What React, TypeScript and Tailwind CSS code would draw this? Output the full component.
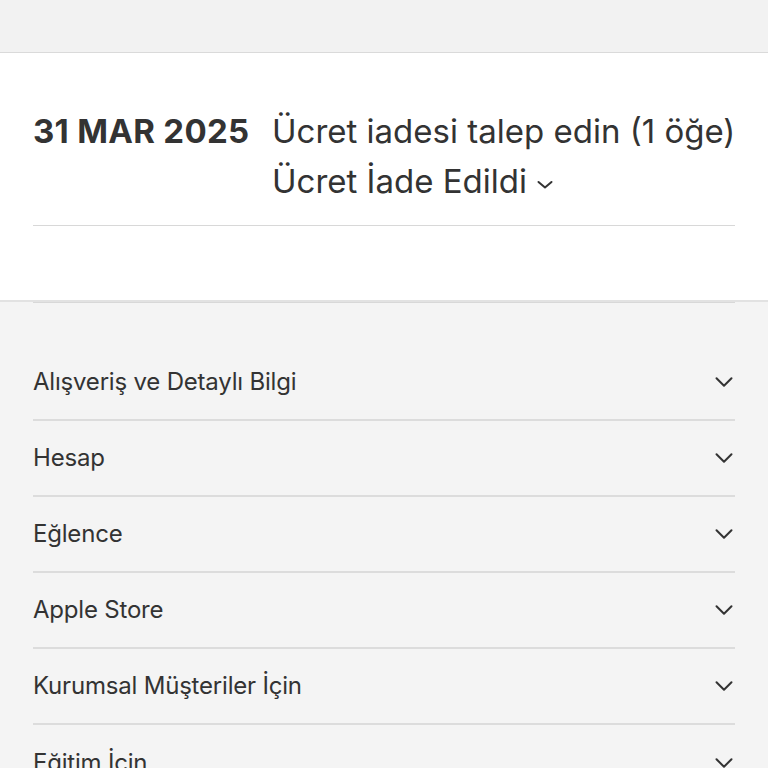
import { ChevronDown } from 'lucide-react'

const sections = [
  'Alışveriş ve Detaylı Bilgi',
  'Hesap',
  'Eğlence',
  'Apple Store',
  'Kurumsal Müşteriler İçin',
  'Eğitim İçin',
]

function SmallChevron() {
  return (
    <svg width="18" height="11" viewBox="0 0 18 11" className="ml-[9px] mt-[6px] inline-block">
      <path d="M2.5 3l6.5 5.5 6.5-5.5" fill="none" stroke="#333" strokeWidth="2" strokeLinecap="round" strokeLinejoin="round" />
    </svg>
  )
}

export default function App() {
  return (
    <div className="h-[768px] overflow-hidden bg-[#f4f4f4] text-[#333] [font-family:Inter,'Noto_Sans',sans-serif]">
      <div className="h-[53px] border-b border-[#dadada] bg-[#f2f2f2]" />

      <div className="bg-white px-[33px] pt-[53px]">
        <div className="flex items-start border-b border-[#d8d8d8] pb-[19px]">
          <div className="w-[239px] shrink-0 whitespace-nowrap text-[33px] font-bold leading-[50px] tracking-[0.3px]">31 MAR 2025</div>
          <div className="whitespace-nowrap text-[33px] leading-[50px]">
            <div>Ücret iadesi talep edin (1 öğe)</div>
            <div className="flex items-center">
              Ücret İade Edildi
              <SmallChevron />
            </div>
          </div>
        </div>
        <div className="h-[74px]" />
      </div>

      <div className="border-t-2 border-[#e2e2e2] px-[33px]">
        <div className="border-t border-[#d8d8d8] pt-[42px]">
          {sections.map((s, i) => (
            <div
              key={s}
              className={
                'flex h-[76px] items-center justify-between ' +
                (i < sections.length - 1 ? 'border-b-2 border-[#dcdcdc]' : '')
              }
            >
              <span className="text-[24px] tracking-[-0.2px]">{s}</span>
              <ChevronDown size={30} strokeWidth={1.6} className="-mr-[4px] text-[#333]" />
            </div>
          ))}
        </div>
      </div>
    </div>
  )
}
